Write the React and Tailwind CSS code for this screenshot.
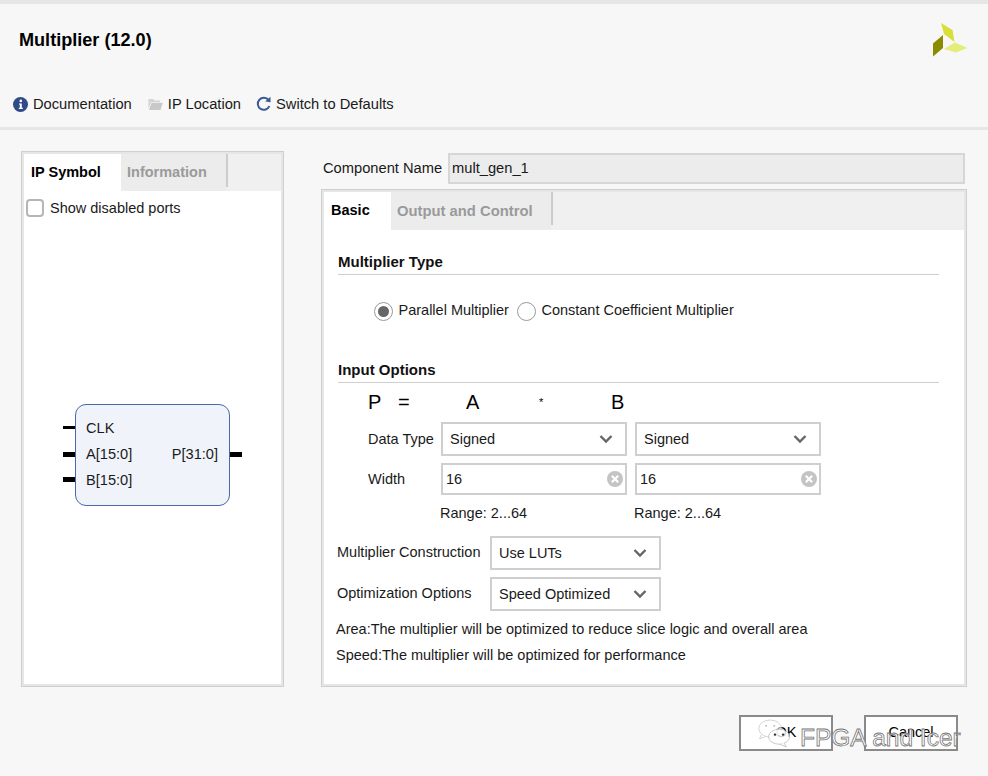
const font = { fontFamily: '"Liberation Sans", Arial, sans-serif' };

function Chevron() {
  return (
    <svg width="14" height="10" viewBox="0 0 14 10" className="shrink-0">
      <path d="M1.5 2 L7 7.5 L12.5 2" fill="none" stroke="#666" strokeWidth="2.4" />
    </svg>
  );
}

function Select({ value, className }) {
  return (
    <div className={`flex h-[34px] items-center justify-between border-2 border-[#cfcfcf] bg-white pl-[7px] pr-[12px] ${className}`}>
      <span className="pt-[1px]">{value}</span>
      <Chevron />
    </div>
  );
}

function WidthInput() {
  return (
    <div className="flex h-[32px] w-[186px] items-center justify-between border-2 border-[#cfcfcf] bg-white pl-[3px] pr-[2px]">
      <span className="pt-[1px]">16</span>
      <svg width="16" height="16" viewBox="0 0 16 16">
        <circle cx="8" cy="8" r="8" fill="#c4c4c4" />
        <path d="M4.8 4.8 L11.2 11.2 M11.2 4.8 L4.8 11.2" stroke="#fff" strokeWidth="2.2" />
      </svg>
    </div>
  );
}

function Section({ title }) {
  return <div className="border-b border-[#cfcfcf] pb-[3px] text-[15px] font-bold leading-[18px] text-[#111]">{title}</div>;
}

function Radio({ checked, label }) {
  return (
    <label className="flex items-center gap-[5.5px]">
      <span className="flex h-[19px] w-[19px] items-center justify-center rounded-full border border-[#999] bg-white">
        {checked && <span className="h-[11px] w-[11px] rounded-full bg-[#666]" />}
      </span>
      {label}
    </label>
  );
}

function Pin({ className }) {
  return <span className={`absolute w-[12px] bg-black ${className}`} />;
}

export default function App() {
  return (
    <div style={font} className="relative flex h-[776px] w-[988px] flex-col overflow-hidden border-t-4 border-[#e6e6e6] bg-[#f7f7f7] text-[14.5px] text-[#1a1a1a]">
      {/* Title */}
      <header className="flex h-[72px] shrink-0 items-start justify-between pl-[19px] pr-[20px]">
        <h1 className="mt-[24px] text-[18.1px] font-bold leading-[24px] text-black">Multiplier (12.0)</h1>
        <svg width="36" height="36" viewBox="0 0 36 36" className="mt-[19px]">
          <polygon points="1,20.5 11,12 11,25 1,33.5" fill="#8b8b00" />
          <polygon points="9,0 20.5,7 22.5,19 12,11" fill="#d9df3a" />
          <polygon points="23,19.5 35.5,25 24,29.5 12,26" fill="#e6ec7a" />
        </svg>
      </header>

      {/* Toolbar */}
      <nav className="flex h-[54px] shrink-0 items-start border-b-[3px] border-[#e6e6e6] pl-[13px] pt-[18px] text-[14.7px] leading-[20px]">
        <span className="flex items-center gap-[5px]">
          <svg width="15" height="15" viewBox="0 0 15 15">
            <circle cx="7.5" cy="7.5" r="7.5" fill="#2f4a86" />
            <circle cx="7.8" cy="3.9" r="1.3" fill="#fff" />
            <path d="M6 6.4 H8.8 V10.8 H9.8 V12 H5.8 V10.8 H6.8 V7.6 H6 Z" fill="#fff" />
          </svg>
          Documentation
        </span>
        <span className="ml-[16px] flex items-center gap-[5px]">
          <svg width="15" height="14" viewBox="0 0 15 14">
            <path d="M0.5 2 H5 L6.5 3.5 H12 V5 H3 L0.5 12 Z" fill="#d4d4d4" />
            <path d="M3.5 5.8 H14.8 L12.5 13 H1 Z" fill="#c8c8c8" />
          </svg>
          IP Location
        </span>
        <span className="ml-[15px] flex items-center gap-[5px]">
          <svg width="15" height="16" viewBox="0 0 15 16">
            <path d="M12.6 4.2 A6 6 0 1 0 13.4 10" fill="none" stroke="#3c5a94" strokeWidth="2" />
            <path d="M9.2 5.6 L14.6 6.2 L14.4 0.8 Z" fill="#3c5a94" />
          </svg>
          Switch to Defaults
        </span>
      </nav>

      {/* Main */}
      <main className="flex shrink-0 gap-[37px] pl-[21px] pt-[21px]">
        {/* IP Symbol panel */}
        <section className="h-[536px] w-[263px] border border-[#cfcfcf]">
          <div className="flex h-full flex-col border-2 border-[#e6e6e6] bg-white">
            <div className="flex h-[37px] shrink-0 items-stretch bg-[#f0f0f0] font-bold">
              <div className="flex w-[97px] items-center bg-white pl-[7px] text-black">IP Symbol</div>
              <div className="flex w-[105px] items-center bg-[#ececec] pl-[6px] text-[#9a9a9a]">Information</div>
              <div className="h-[33px] w-[2px] bg-[#cccccc]" />
            </div>
            <label className="ml-[2px] mt-[8px] flex items-center gap-[6px] leading-[18px]">
              <span className="h-[18px] w-[18px] rounded-[4px] border-2 border-[#b5b5b5] bg-white" />
              Show disabled ports
            </label>
            {/* Symbol */}
            <div className="relative ml-[51px] mt-[187px] h-[102px] w-[155px] rounded-[11px] border border-[#4a6aa5] bg-[#f0f4fa] pl-[10px] pt-[10px] text-[14.6px] leading-[26px]">
              <Pin className="left-[-13px] top-[21px] h-[3px]" />
              <Pin className="left-[-13px] top-[47px] h-[5px]" />
              <Pin className="left-[-13px] top-[72px] h-[5px]" />
              <Pin className="right-[-13px] top-[47px] h-[5px]" />
              <div>CLK</div>
              <div className="flex justify-between pr-[11px]">
                <span>A[15:0]</span>
                <span>P[31:0]</span>
              </div>
              <div>B[15:0]</div>
            </div>
          </div>
        </section>

        {/* Right column */}
        <div className="flex w-[646px] flex-col">
          <div className="mb-[5px] mt-[1px] flex h-[32px] items-center pl-[2px] text-[14.7px]">
            <span className="w-[125px] pt-[1px]">Component Name</span>
            <div className="flex h-[31px] w-[517px] items-center border-2 border-[#d6d6d6] bg-[#ececec] pl-[2px] pt-[1px]">mult_gen_1</div>
          </div>

          <section className="h-[498px] border border-[#cfcfcf]">
            <div className="flex h-full flex-col border-2 border-[#e6e6e6] bg-white">
              <div className="flex h-[38px] shrink-0 items-stretch bg-[#f0f0f0] font-bold">
                <div className="flex w-[67px] items-center bg-white pl-[7px] text-black">Basic</div>
                <div className="flex w-[160px] items-center bg-[#ececec] pl-[6px] text-[14.8px] text-[#9a9a9a]">Output and Control</div>
                <div className="h-[33px] w-[2px] bg-[#cccccc]" />
              </div>

              <div className="flex flex-1 flex-col pl-[14px] pr-[25px]">
                <div className="mt-[23px]">
                  <Section title="Multiplier Type" />
                </div>
                <div className="ml-[36px] mt-[26px] flex h-[20px] items-center gap-[8px]">
                  <Radio checked label="Parallel Multiplier" />
                  <Radio label="Constant Coefficient Multiplier" />
                </div>

                <div className="mt-[40px]">
                  <Section title="Input Options" />
                </div>

                <div className="ml-[30px] mt-[8px] flex h-[22px] items-center text-[20px] text-black">
                  <span className="w-[30px]">P</span>
                  <span className="w-[68px]">=</span>
                  <span className="w-[73px]">A</span>
                  <span className="w-[72px] text-[11px]">*</span>
                  <span>B</span>
                </div>

                <div className="ml-[30px] mt-[9px] flex items-center">
                  <span className="w-[73px] pt-[1px]">Data Type</span>
                  <Select value="Signed" className="w-[186px]" />
                  <Select value="Signed" className="ml-[8px] w-[186px]" />
                </div>
                <div className="ml-[30px] mt-[7px] flex items-center">
                  <span className="w-[73px] pt-[1px]">Width</span>
                  <WidthInput />
                  <div className="ml-[8px]"><WidthInput /></div>
                </div>
                <div className="ml-[102px] mt-[9px] flex leading-[18px]">
                  <span className="w-[194px]">Range: 2...64</span>
                  <span>Range: 2...64</span>
                </div>

                <div className="-ml-[1px] mt-[14px] flex items-center">
                  <span className="w-[153px] whitespace-nowrap">Multiplier Construction</span>
                  <Select value="Use LUTs" className="w-[171px]" />
                </div>
                <div className="-ml-[1px] mt-[7px] flex items-center">
                  <span className="w-[153px] whitespace-nowrap">Optimization Options</span>
                  <Select value="Speed Optimized" className="w-[171px]" />
                </div>
                <p className="-ml-[2px] mt-[9px] leading-[18px]">Area:The multiplier will be optimized to reduce slice logic and overall area</p>
                <p className="-ml-[2px] mt-[8px] leading-[18px]">Speed:The multiplier will be optimized for performance</p>
              </div>
            </div>
          </section>
        </div>
      </main>

      {/* Footer */}
      <footer className="mt-[28px] flex justify-end gap-[31px] pr-[30px]">
        <button className="h-[36px] w-[94px] border-2 border-[#8a8a8a] bg-white text-black">OK</button>
        <button className="h-[36px] w-[94px] border-2 border-[#8a8a8a] bg-white text-black">Cancel</button>
      </footer>

      {/* Watermark */}
      <div className="absolute left-[758px] top-[715px]">
        <svg width="34" height="30" viewBox="0 0 42 44" preserveAspectRatio="none">
          <ellipse cx="15" cy="14" rx="14" ry="12.5" fill="#ffffff" fillOpacity="0.6" stroke="#b8b8b8" strokeWidth="0.8" />
          <path d="M4 23 L2 29 L9 26" fill="#fff" stroke="#b8b8b8" strokeWidth="0.8" />
          <circle cx="10" cy="10" r="1.3" fill="#b8b8b8" />
          <circle cx="20" cy="10" r="1.3" fill="#b8b8b8" />
          <ellipse cx="26" cy="26" rx="13" ry="11" fill="#ffffff" fillOpacity="0.8" stroke="#a8a8a8" strokeWidth="0.8" />
          <path d="M32 35 L35 41 L27 37" fill="#fff" stroke="#a8a8a8" strokeWidth="0.8" />
          <circle cx="21" cy="23" r="1.6" fill="#333" />
          <circle cx="31" cy="23" r="1.6" fill="#333" />
        </svg>
      </div>
      <div className="absolute left-[800px] top-[716px] whitespace-nowrap text-[24.5px] leading-[36px] text-white [-webkit-text-stroke:0.8px_#777]">
        FPGA and Icer
      </div>
    </div>
  );
}
